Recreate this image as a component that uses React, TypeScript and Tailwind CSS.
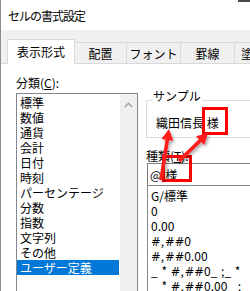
import React from "react";

const FONT = { fontFamily: '"Noto Sans CJK JP", "Noto Sans", sans-serif' };

function Arrow({ x1, y1, x2, y2 }: { x1: number; y1: number; x2: number; y2: number }) {
  const dx = x2 - x1;
  const dy = y2 - y1;
  const len = Math.hypot(dx, dy);
  const ux = dx / len;
  const uy = dy / len;
  const px = -uy;
  const py = ux;
  const head = 11;
  const hw = 6;
  const sw = 1.8;
  const bx = x2 - ux * head;
  const by = y2 - uy * head;
  const pts = [
    [x1 + px * sw, y1 + py * sw],
    [bx + px * sw, by + py * sw],
    [bx + px * hw, by + py * hw],
    [x2, y2],
    [bx - px * hw, by - py * hw],
    [bx - px * sw, by - py * sw],
    [x1 - px * sw, y1 - py * sw],
  ]
    .map((p) => p.join(","))
    .join(" ");
  return <polygon points={pts} fill="#ff1a1a" filter="url(#sh)" />;
}

const categories = [
  "標準",
  "数値",
  "通貨",
  "会計",
  "日付",
  "時刻",
  "パーセンテージ",
  "分数",
  "指数",
  "文字列",
  "その他",
  "ユーザー定義",
];

const formats = [
  "G/標準",
  "0",
  "0.00",
  "#,##0",
  "#,##0.00",
  "_ * #,##0_ ;_ *",
  "_ * #,##0.00_ ;_",
];

function FormatText({ text }: { text: string }) {
  return (
    <>
      {Array.from(text).map((ch, i) => {
        let cls = "";
        if (ch === "#") cls = "font-['DejaVu_Sans'] text-[11.5px]";
        else if (ch === "," || ch === "_" || ch === "*") cls = "mr-[1px]";
        return (
          <span key={i} className={cls}>
            {ch}
          </span>
        );
      })}
    </>
  );
}

export default function App() {
  return (
    <div
      className="relative w-[250px] h-[291px] overflow-hidden bg-white border-l border-[#8c8c8c] text-[12px] text-black"
      style={FONT}
    >
      <div className="absolute top-0 right-0 w-[12px] h-[2px] bg-[#4a4a4a]" />
      {/* title bar */}
      <div className="h-[30px] flex items-center pl-[7px] tracking-[-1px] leading-[15px]">
        セルの書式設定
      </div>
      {/* tab strip */}
      <div className="h-[33px] bg-[#f0f0f0] flex items-end pl-[6px] whitespace-nowrap">
        <div className="relative z-10 shrink-0 w-[68px] h-[25px] mb-[-1px] bg-white border-l border-t border-r border-[#d9d9d9] flex items-center justify-center pb-[1px] leading-[15px]">
          表示形式
        </div>
        <div className="shrink-0 w-[52px] h-[21px] border-t border-r border-[#d9d9d9] flex items-center justify-center leading-[15px]">
          配置
        </div>
        <div className="shrink-0 w-[54px] h-[21px] border-t border-r border-[#d9d9d9] flex items-center justify-center leading-[15px] overflow-hidden">
          フォント
        </div>
        <div className="shrink-0 w-[54px] h-[21px] border-t border-r border-[#d9d9d9] flex items-center justify-center leading-[15px]">
          罫線
        </div>
        <div className="shrink-0 w-[54px] h-[21px] border-t border-[#d9d9d9] flex items-center pl-[6px] leading-[15px] overflow-hidden">
          塗りつぶし
        </div>
      </div>
      {/* panel */}
      <div className="border-t border-[#d9d9d9] flex leading-[15px]">
        {/* left column */}
        <div className="pl-[15px] flex flex-col shrink-0">
          <div className="mt-[11px] h-[15px]">
            分類(<span className="underline">C</span>):
          </div>
          <div className="mt-[3px] w-[122px] h-[230px] border border-[#828790] flex">
            <div className="w-[103px] pt-[1px] flex flex-col">
              {categories.map((c, i) => (
                <div
                  key={c}
                  className={
                    i === categories.length - 1
                      ? "h-[15px] pl-[3px] bg-[#0078d7] text-white whitespace-nowrap"
                      : "h-[15px] pl-[3px] whitespace-nowrap"
                  }
                >
                  {c}
                </div>
              ))}
            </div>
            <div className="w-[17px] ml-[1px] bg-[#f0f0f0] flex justify-center pt-[8px]">
              <svg width="9" height="6" viewBox="0 0 9 6">
                <path d="M0.8 5 L4.5 1.3 L8.2 5" stroke="#a3a3a3" strokeWidth="1.4" fill="none" />
              </svg>
            </div>
          </div>
        </div>
        {/* right column */}
        <div className="ml-[8px] flex flex-col w-[120px] shrink-0">
          <div className="relative mt-[36px] h-[38px] border border-[#dcdcdc] pl-[9px] pt-[14px] whitespace-nowrap">
            <span className="absolute left-[5px] top-[-13px] bg-white px-[1px]">サンプル</span>
            織田信長{" "}
            <span className="relative">
              様
              <span className="absolute left-[-5px] top-[-7px] w-[26px] h-[28px] border-[3px] border-[#ff0000]" />
            </span>
          </div>
          <div className="mt-[10px] h-[15px]">
            種類(<span className="underline">T</span>):
          </div>
          <div className="ml-[1px] h-[23px] border border-[#7a7a7a] flex items-center pl-[2px] whitespace-nowrap">
            @{" "}
            <span className="relative ml-[4px]">
              様
              <span className="absolute left-[-3px] top-[-12px] w-[30px] h-[27px] border-[3px] border-[#ff0000]" />
            </span>
          </div>
          <div className="ml-[1px] mt-[-1px] h-[120px] border border-[#828790] pt-[2px] pl-[3px] flex flex-col">
            {formats.map((f) => (
              <div key={f} className="h-[15px] whitespace-pre">
                <FormatText text={f} />
              </div>
            ))}
          </div>
        </div>
      </div>
      <svg
        className="absolute left-0 top-0 pointer-events-none"
        width="250"
        height="291"
        viewBox="0 0 250 291"
      >
        <defs>
          <filter id="sh" x="-50%" y="-50%" width="200%" height="200%">
            <feDropShadow dx="1.5" dy="2" stdDeviation="1.5" floodColor="#000" floodOpacity="0.35" />
          </filter>
        </defs>
        <Arrow x1={160} y1={180} x2={168} y2={129} />
        <Arrow x1={178} y1={161} x2={207} y2={133} />
      </svg>
    </div>
  );
}
